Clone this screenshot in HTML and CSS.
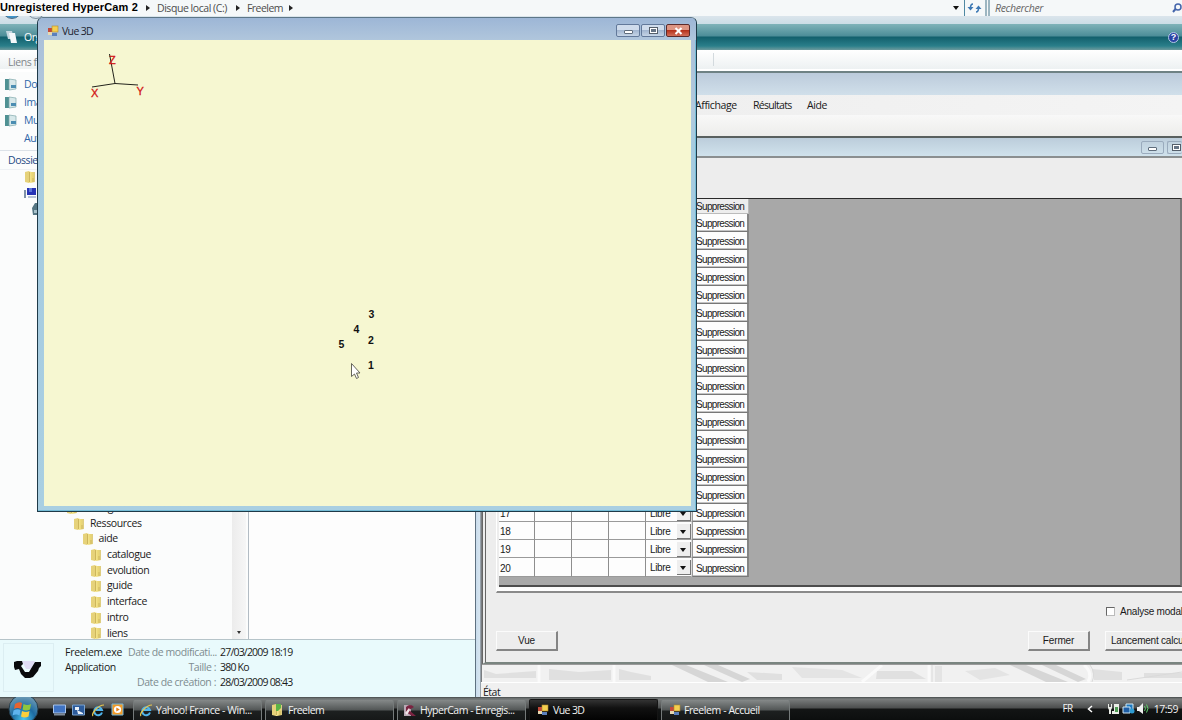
FILE: index.html
```
<!DOCTYPE html>
<html lang="fr">
<head>
  <meta charset="UTF-8">
  <title>Freelem</title>
  <link rel="stylesheet" href="styles.css">
</head>
<body>
  <svg width="0" height="0" class="defs">
    <defs>
      <linearGradient id="gold"><stop offset="0" stop-color="#f6e9a0"/><stop offset=".5" stop-color="#ecd873"/><stop offset="1" stop-color="#dccb82"/></linearGradient>
      <radialGradient id="orb" cx=".5" cy=".85" r=".8"><stop offset="0" stop-color="#49c5ee"/><stop offset=".5" stop-color="#1d6ba2"/><stop offset="1" stop-color="#6f9bb4"/></radialGradient>
      <symbol id="folder" viewBox="0 0 12 14"><path d="M1 2l4-1v12l-4-1z" fill="#e6d27a"/><path d="M5 1l2 1h4v10l-5 1H5z" fill="url(#gold)"/><path d="M5.500 2v10M9 8v4" stroke="#cdb65c" fill="none"/></symbol>
      <symbol id="form" viewBox="0 0 12 12"><rect x="1" y="3" width="4" height="4" fill="#c3493a"/><rect x="5" y="1" width="6" height="6" fill="#f4cf50" stroke="#b28b2c" stroke-width=".6"/><rect x="1" y="7" width="4" height="3" fill="#e8d9b0"/><rect x="5" y="8" width="5" height="3" fill="#5b80bd"/></symbol>
      <symbol id="ie" viewBox="0 0 14 14"><path d="M11 9.500A4 4 0 1 1 11 7H5" fill="none" stroke="#4fb3ea" stroke-width="2"/><path d="M2 13C0 11 7 2 13 2" fill="none" stroke="#e8c84f" stroke-width="1.200"/></symbol>
      <symbol id="doc" viewBox="0 0 12 13"><path d="M0 1h5v11H0z" fill="#4f9193"/><path d="M4 1l7 1v9l-7 1z" fill="#d7e8ea" stroke="#7fa7ab" stroke-width=".7"/><path d="M6 7h5v3H6z" fill="#4b8db2"/></symbol>
    </defs>
  </svg>

  <div class="desktop">
    <!-- explorateur -->
    <div class="explorer">
      <div class="address">
        <i class="sep"></i><span class="crumb c1">Disque local (C:)</span><i class="sep"></i><span class="crumb c2">Freelem</span><i class="sep"></i>
        <div class="addr-right">
          <i class="down"></i>
          <svg class="refresh" width="20" height="16" viewBox="0 0 20 16"><path d="M8 4Q5.500 4 5.500 8M11 12q2.500 0 2.500-4" fill="none" stroke="#3c78b4" stroke-width="1.600"/><path d="M2.500 7h6l-3 3.500zM10.500 9h6l-3-3.500z" fill="#3c78b4"/></svg>
          <span class="search">Rechercher</span>
          <svg class="loupe" width="12" height="16" viewBox="0 0 12 16"><circle cx="8" cy="7" r="3" fill="none" stroke="#4465ab" stroke-width="1.500"/><path d="M5.500 9L3 12" stroke="#4465ab" stroke-width="2"/></svg>
        </div>
      </div>
      <div class="glass">
        <svg width="60" height="8" viewBox="0 0 60 8"><circle cx="12" cy="-7" r="9.500" fill="#3f93c8" stroke="#4d6f88"/><circle cx="36" cy="-7" r="9.500" fill="#cfdbe4" stroke="#7b8d9b"/></svg>
      </div>
      <div class="teal">
        <svg width="14" height="15" viewBox="0 0 14 15"><path d="M1 1h6l2 8H3z" fill="#c4d6df"/><path d="M4 3h6l2 10H6z" fill="#f4f8fa"/></svg>
        <span>Org</span>
        <b class="help">?</b>
      </div>
      <div class="strip"><i></i></div>
      <div class="panes">
        <div class="nav">
          <div class="nav-links">
            <p class="nav-title">Liens f</p>
            <p class="nav-link"><svg width="12" height="13"><use href="#doc"/></svg>Do</p>
            <p class="nav-link"><svg width="12" height="13"><use href="#doc"/></svg>Ima</p>
            <p class="nav-link"><svg width="12" height="13"><use href="#doc"/></svg>Mu</p>
            <p class="nav-link more">Aut</p>
            <p class="nav-dossiers">Dossie</p>
            <div class="nav-tree">
              <svg class="n1" width="12" height="14"><use href="#folder"/></svg>
              <svg class="n1" width="14" height="12" viewBox="0 0 14 12"><path d="M3 1h9v7H3z" fill="#2633b5"/><path d="M5 1h3v4H5z" fill="#5b74d8"/><path d="M0 3h2v8H0z" fill="#7f92a8"/><path d="M4 9h8v2H4z" fill="#b8c4d6"/></svg>
              <svg class="n2" width="12" height="14" viewBox="0 0 12 14"><path d="M0 6l3-5h5v12H1z" fill="#557683"/><path d="M2 8h5v3H2z" fill="#a8c1ca"/></svg>
            </div>
          </div>
          <div class="tree" id="tree"></div>
          <div class="scroll"><i class="down small"></i></div>
        </div>
        <div class="files"></div>
      </div>
      <div class="details">
        <div class="thumb"><svg width="30" height="20" viewBox="0 0 30 20"><path d="M9 2h13l-4 8h-5z" fill="#e0dcf5"/><path d="M1 3l3-1h5l1 3-2 2 4 6h4l6-10h6v4l-2 2-1 3-5 6-3 1h-5l-4-4-2-5-4 1-1-3z" fill="#0a0a0c"/></svg></div>
        <div class="name"><p class="d-name">Freelem.exe</p><p class="d-app">Application</p></div>
        <div class="keys"><p class="k1">Date de modificati...</p><p class="k2">Taille :</p><p class="k3">Date de création :</p></div>
        <div class="vals"><p class="v1">27/03/2009 18:19</p><p class="v2">380 Ko</p><p class="v1">28/03/2009 08:43</p></div>
      </div>
    </div>

    <!-- fenêtre principale Freelem -->
    <div class="app">
      <div class="app-title"></div>
      <div class="menu"><span class="m1">Affichage</span><span class="m2">Résultats</span><span class="m3">Aide</span></div>
      <div class="tools"></div>
      <div class="child">
        <div class="child-title"><i class="cbtn"><s class="min"></s></i><i class="cbtn"><s class="max"></s></i></div>
        <div class="child-body">
          <div class="frame">
            <div class="grid">
              <div class="rows" id="rows"></div>
            </div>
          </div>
          <div class="check"><i></i><span>Analyse modal</span></div>
          <div class="buttons">
            <span class="btn vue">Vue</span>
            <span class="btn fermer">Fermer</span>
            <span class="btn calc">Lancement calcu</span>
          </div>
        </div>
      </div>
      <svg class="sketch" width="700" height="17" viewBox="0 0 700 17">
        <rect width="700" height="17" fill="#f1f1f1"/>
        <g fill="#e0e0e0"><path d="M2 5l12 4 40-3v7H2zM67 4l30 3 32-2v10H67zM137 4l12 3 20 4v4h-32zM265 7l35 2v6h-25zM395 6h35l14 8h-50zM610 4l30 3v8h-28zM662 8h38v5h-38z"/><path d="M310 2l50 3 20 8h-60zM453 1h7v16h-7zM483 6l30-3 15 7-30 5z" fill="#e4e4e4"/></g>
        <path d="M190 0h14l42 17h-20zM222 0h14l32 14-8 3zM528 0h16l42 17h-22zM560 0h14l30 14-8 3z" fill="#d6d6d6"/>
        <g fill="none" stroke="#fafafa" stroke-width="3"><path d="M57 0v17M132 0v17M380 17l20-17M447 0v17M602 0q9 8 4 17"/></g>
        <g fill="none" stroke="#dadada"><path d="M450 0v17M608 0q6 8 2 17M645 15l55-8"/></g>
      </svg>
      <div class="status">État</div>
    </div>

    <!-- fenêtre Vue 3D -->
    <div class="vue3d">
      <div class="v-title">
        <svg width="12" height="12"><use href="#form"/></svg>
        <span>Vue 3D</span>
        <i class="wbtn"><s class="min"></s></i><i class="wbtn"><s class="max"></s></i>
        <i class="wbtn close"><svg width="9" height="8" viewBox="0 0 9 8"><path d="M1.500 1l6 6M7.500 1l-6 6" stroke="#fff" stroke-width="2"/></svg></i>
      </div>
      <svg class="view" width="647" height="466" viewBox="44 40 647 466">
        <path d="M109.500 54l5.500 29.500L92 87M115 83.500l23 1.500" fill="none" stroke="#23231c"/>
        <g class="axis"><text x="91" y="97">X</text><text x="136.500" y="94.500">Y</text><text x="109" y="63.500">Z</text></g>
        <g class="nodes"><text x="368.500" y="318">3</text><text x="353.500" y="332.500">4</text><text x="338.500" y="348">5</text><text x="368" y="344">2</text><text x="368" y="369">1</text></g>
        <path d="M351.500 363.500v13l3-2.500 2 4.500 2-1-2-4.500h3.500z" fill="#fff" stroke="#55554c" stroke-width=".9"/>
      </svg>
    </div>

    <b class="watermark">Unregistered HyperCam 2</b>
  </div>

  <div class="taskbar">
    <svg class="start" width="34" height="23" viewBox="0 0 34 23"><circle cx="16.500" cy="12" r="14.500" fill="url(#orb)" stroke="#253d4c"/><path d="M8 7q4-3 7-1l-1 6q-4-2-7 0z" fill="#e8642f"/><path d="M16.500 7q4 2 7.500 0l-1 5.500q-4 2-7.500 0z" fill="#8fc63e"/><path d="M6.500 13.500q4-2 7-.5l-1 5.500q-3-2-7 0z" fill="#5fb4ee"/><path d="M15 14q4 2 7.500 0l-1 5.500q-4 2-7.500 0z" fill="#fbcf3c"/></svg>
    <div class="quick">
      <svg width="13" height="12" viewBox="0 0 13 12"><path d="M.5 1h12v8H.5z" fill="#3f73c3" stroke="#a8c4ea"/><path d="M1 10.500h11" stroke="#7f8b98" stroke-width="2"/></svg>
      <svg width="13" height="12" viewBox="0 0 13 12"><path d="M.5 1h12v10H.5z" fill="#2c5b9b" stroke="#7ba4cf"/><path d="M3 3h4v3H3zM5 6l6 3v1H6z" fill="#e8f0f8"/></svg>
      <svg width="14" height="14"><use href="#ie"/></svg>
      <svg width="13" height="13" viewBox="0 0 13 13"><path d="M1 1h11v11H1z" fill="#f29a26" stroke="#73b7dd"/><circle cx="6.500" cy="6.500" r="3.600" fill="#fff"/><path d="M5.300 4.500l3.500 2-3.500 2z" fill="#e77c12"/></svg>
    </div>
    <div class="tasks">
      <div class="task"><svg width="14" height="14"><use href="#ie"/></svg><span class="t1">Yahoo! France - Win...</span></div>
      <div class="task"><svg width="12" height="14" viewBox="0 0 12 14"><use href="#folder" width="12" height="14"/><path d="M5 1h5v4L7 8H5z" fill="#5cb446"/></svg><span class="t2">Freelem</span></div>
      <div class="task"><svg width="14" height="13" viewBox="0 0 14 13"><path d="M1 1h7v11H1z" fill="#b9a9b5"/><path d="M3 3q4-4 8 0L6 6l7 6H9L3 8z" fill="#7a2340"/><path d="M2 9l4-5 1 2-3 5z" fill="#f0e3e8"/></svg><span class="t3">HyperCam - Enregis...</span></div>
      <div class="task on"><svg width="12" height="12"><use href="#form"/></svg><span class="t4">Vue 3D</span></div>
      <div class="task"><svg width="12" height="12"><use href="#form"/></svg><span class="t5">Freelem - Accueil</span></div>
    </div>
    <div class="tray">
      <span class="lang">FR</span>
      <svg class="chev" width="6" height="8" viewBox="0 0 6 8"><path d="M5 1L1.500 4 5 7" fill="none" stroke="#fff" stroke-width="1.500"/></svg>
      <svg width="42" height="13" viewBox="0 0 42 13"><path d="M0 2h1v3h2V2h1v4L3 8v4H1V8L0 6zM6 2h5v10H4V9h2z" fill="#e9ece6"/><path d="M7 5h3v5H7z" fill="#4e9c54"/><path d="M18 2h7v6h-7z" fill="#1e78be" stroke="#d0e8f5"/><path d="M15 5h7v6h-7z" fill="#1f5ea5" stroke="#d0e8f5"/><circle cx="24" cy="9" r="2.500" fill="#2f9bd1"/><path d="M29 5h2l4-4v11l-4-3h-2z" fill="#f0f0f0"/><path d="M36.500 4q2 2.500 0 5M38.500 2.500q3 4 0 8" fill="none" stroke="#5fd06b"/></svg>
      <span class="clock">17:59</span>
    </div>
  </div>

  <script>
    // lignes de la grille
    var rows = '<i class="th"></i><i class="th"></i><i class="th"></i><i class="th"></i><i class="th"></i><i class="th">Suppression</i>';
    for (var i = 1; i <= 20; i++) {
      rows += '<i>' + i + '</i><i></i><i></i><i></i><i class="libre">Libre<u></u></i><i class="sup">Suppression</i>';
    }
    document.getElementById('rows').innerHTML = rows;

    // arborescence des dossiers : nom, niveau
    var tree = [['Debug', 0], ['Ressources', 1], ['aide', 2], ['catalogue', 3], ['evolution', 3], ['guide', 3], ['interface', 3], ['intro', 3], ['liens', 3]];
    var html = '';
    for (var j = 0; j < tree.length; j++) {
      html += '<p class="lv' + tree[j][1] + '"><svg width="12" height="14"><use href="#folder"/></svg>' + tree[j][0] + '</p>';
    }
    document.getElementById('tree').innerHTML = html;
  </script>
</body>
</html>
```
FILE: styles.css
```
*{margin:0;padding:0;box-sizing:border-box;}
body{width:1182px;height:720px;overflow:hidden;font:11px/16px "Open Sans","Noto Sans",sans-serif;color:#1a1a1a;display:flex;flex-direction:column;}
i,s,u{font-style:normal;text-decoration:none;}
svg{display:block;flex:none;}
span,p,b{white-space:nowrap;}
.defs{position:absolute;}

.desktop{position:relative;height:697px;overflow:hidden;}
.watermark{position:absolute;left:0;top:0;width:140px;height:13px;background:#fafbfc;color:#000;font:bold 11px/14px "Liberation Sans",Arial,sans-serif;letter-spacing:.12px;}

/* explorateur */
.explorer{height:697px;display:flex;flex-direction:column;background:#fbfcfc;}
.address{height:16px;background:#f5f8f9;display:flex;align-items:center;padding-left:146px;color:#4c4c4c;}
.sep{width:0;height:0;border:3px solid transparent;border-left:4px solid #222;border-right:0;}
.crumb{font-size:10.5px;padding-left:7px;}
.c1{width:86px;letter-spacing:-.45px;}
.c2{width:49px;letter-spacing:-.55px;}
.addr-right{margin-left:auto;display:flex;align-items:center;}
.down{width:0;height:0;border:3px solid transparent;border-top:4px solid #111;border-bottom:0;}
.refresh{margin-left:5px;border-left:1px solid #4f88a2;width:21px;}
.search{width:185px;border-left:5px double #9db6c1;padding-left:5px;font-size:10.5px;font-style:italic;letter-spacing:-.35px;color:#666;}
.glass{height:8px;background:linear-gradient(#dbe5ec,#cbdde6);}
.teal{height:26px;background:linear-gradient(#7fb3b9,#4c8d98 12px,#125f6c 13px,#2a7f8a 22px,#6d9a9d);display:flex;align-items:center;padding-left:5px;color:#fff;}
.teal span{margin-left:5px;font-size:10.5px;letter-spacing:-.5px;}
.help{margin-left:auto;margin-right:3px;width:11px;height:11px;border-radius:50%;background:#2a43a4;border:1px solid #b4c8e6;color:#fff;font:bold 9px/9px "Liberation Sans",sans-serif;text-align:center;}
.strip{height:22px;background:linear-gradient(#fff,#edf1f2);border-bottom:3px solid #fff;padding:3px 0 0 713px;}
.strip i{display:block;height:13px;border-left:1px solid #d3dade;}
.panes{height:567px;display:flex;}
.nav{width:249px;display:flex;border-right:1px solid #b3bcc4;}
.nav-links{width:66px;height:438px;color:#2f66a8;margin-top:-19px;font-size:10.5px;letter-spacing:-.45px;}
.nav-title{color:#81868b;padding-left:8px;height:21px;margin-top:1px;}
.nav-link{display:flex;align-items:center;gap:7px;height:18px;padding-left:5px;}
.nav-link.more{padding-left:24px;}
.nav-dossiers{border-top:1px solid #dce2e8;border-bottom:1px solid #eef1f4;height:20px;line-height:18px;margin-top:3px;padding-left:8px;color:#274a85;}
.nav-tree svg{margin:3px 0 0 24px;}
.nav-tree svg:first-child{margin-top:0;}
.nav-tree svg.n2{margin-left:32px;}
.tree{width:166px;margin-top:428px;font-size:10.5px;letter-spacing:-.38px;overflow:hidden;}
.tree p{height:15.7px;line-height:15.7px;display:flex;align-items:center;gap:5px;}
.lv0{padding-left:0;}
.lv1{padding-left:7px;}
.lv2{padding-left:15.5px;}
.lv3{padding-left:24px;}
.scroll{width:14px;background:linear-gradient(90deg,#ececec,#f6f6f6);display:flex;align-items:flex-end;justify-content:center;padding-bottom:5px;}
.small{border-width:3px 2.5px 0;border-top-color:#333;}
.files{flex:1;background:#fdfdfd;}
.details{height:58px;border-top:1px solid #b6c4c9;background:#e9fafc;display:flex;line-height:15px;padding-top:5px;font-size:10.5px;}
.thumb{width:51px;height:49px;margin:-2px 0 0 3px;border:1px solid #dceef2;padding:15px 0 0 9px;}
.name{width:64px;padding-left:11px;}
.keys{width:88px;margin-left:10px;text-align:right;color:#7e8c90;margin-right:4px;}
.d-name{letter-spacing:-.25px;}
.d-app{letter-spacing:-.35px;}
.k1,.k2,.k3{letter-spacing:-.42px;}
.v1{letter-spacing:-.8px;}
.v2{letter-spacing:-.8px;}

/* fenetre principale */
.app{position:absolute;left:475px;top:71px;width:707px;height:626px;padding-left:7px;background:linear-gradient(90deg,#5f7180 1px,#c9dcec 1px,#d7e5f0 5px,#596067 6px,#9a9a9a 7px);border-top:2px solid #6f8284;display:flex;flex-direction:column;}
.app-title{height:22px;flex:none;margin-left:-6px;background:linear-gradient(#bccbdb,#d0dfea);}
.menu{height:20px;flex:none;background:linear-gradient(90deg,#ededed,#f4f4f4);display:flex;align-items:center;padding-left:213px;font-size:10.5px;}
.m1{width:58px;letter-spacing:-.38px;}
.m2{width:54px;letter-spacing:-.7px;}
.m3{letter-spacing:-.4px;}
.tools{height:21px;flex:none;background:linear-gradient(#f8f8f8,#ededeb);}
.child{height:528px;background:#ededed;border-top:2px solid #59605f;border-left:4px double #666;border-bottom:2px solid #7a8580;overflow:hidden;flex:none;}
.child-title{height:20px;background:linear-gradient(#bccddb,#d0e2ec);border-bottom:2px solid #8b8f90;display:flex;justify-content:flex-end;padding-top:3px;gap:3px;}
.cbtn{width:23px;height:13px;border:1px solid #9aabbd;border-radius:2px;display:flex;align-items:center;justify-content:center;}
.cbtn:last-child{width:15px;border-right:0;padding-left:2px;}
.min{width:9px;height:4px;border:1px solid #5f6d7c;background:#fff;border-radius:1px;margin-top:3px;}
.max{width:9px;height:7px;flex:none;border:1px solid #555f6b;background:#f5f5f5;box-shadow:inset 0 0 0 1px #fff,inset 0 0 0 4px #667485;}
.child-body{display:flex;flex-direction:column;}
.frame{margin:40px 0 0 10px;height:395px;border-bottom:2px solid #8a8a8a;border-left:1px solid #fff;padding-left:2px;background:linear-gradient(#ededed 388px,#fafafa 389px,#fff);}
.grid{height:389px;background:#a8a8a8;border-top:1px solid #2a2a2a;border-bottom:2px solid #4c4c4c;border-right:2px solid #777;}
.rows{display:grid;grid-template-columns:36px 37px 37px 37px 46px 57px;width:250px;grid-template-rows:14.5px;grid-auto-rows:18.16px;font:10px "Liberation Sans",Arial,sans-serif;letter-spacing:-.65px;}
.rows i{background:#fdfdfd;border-right:1px solid #8e8e8e;border-bottom:1px solid #9a9a9a;padding:2px 0 0 1px;display:flex;align-items:center;letter-spacing:-.2px;}
.rows .th{background:#ededed;border-color:#bbb;padding-left:4px;letter-spacing:-.67px;}
.rows .libre{padding:1px 0 0 4px;border-right-color:#ddd;letter-spacing:-.35px;justify-content:space-between;}
.rows .sup{padding-left:3px;border-right:2px solid #858585;border-bottom:1px solid #777;border-left:1px solid #999;box-shadow:inset 0 -1px #c4c4c4;letter-spacing:-.67px;}
.rows u{width:14px;height:15px;background:#eee;border-right:1px solid #777;border-bottom:1px solid #777;padding:6px 0 0 3px;}
.rows u:before{content:"";display:block;width:0;border:3.5px solid transparent;border-top:4px solid #111;border-bottom:0;}
.check{height:16px;margin-top:10px;padding-left:620px;display:flex;align-items:center;gap:5px;font:10px "Liberation Sans",Arial,sans-serif;letter-spacing:-.22px;}
.check i{width:9px;height:9px;background:#fff;border:1px solid #bbb;border-top-color:#666;border-left-color:#666;flex:none;}
.buttons{margin-top:12px;display:flex;padding-left:10px;font:10px "Liberation Sans",Arial,sans-serif;}
.btn{width:62px;height:20px;line-height:18px;flex:none;text-align:center;letter-spacing:-.1px;border:1px solid #fbfbfb;border-right:2px solid #858585;border-bottom:2px solid #858585;}
.fermer{margin-left:470px;}
.calc{margin-left:15px;width:77px;text-align:left;padding-left:5px;letter-spacing:-.22px;border-right:0;}
.sketch{margin-top:1px;}
.status{height:15px;flex:none;margin-left:-1px;background:#f0f0f0;font-size:10.5px;line-height:14px;padding:2px 0 0 2px;letter-spacing:-.5px;border-top:1px solid #fff;}

/* vue 3D */
.vue3d{position:absolute;left:37px;top:17px;width:660px;height:495px;border:1px solid #1f3a48;border-top-color:#5d7788;border-radius:6px 6px 0 0;background:linear-gradient(#a8bed8,#b2c9dd 90px,#a6cbe0 130px,#a9cfe2);padding:0 5px 5px 6px;box-shadow:inset -1px -1px #74bcd6;}
.v-title{height:22px;margin:0 -5px 0 -6px;padding:4px 6px 0 9px;display:flex;align-items:center;background:linear-gradient(#9db6d6,#b0c6dc);border-radius:5px 5px 0 0;}
.v-title svg{margin-top:-1px;}
.v-title span{margin:-1px auto 0 3px;font-size:10.5px;letter-spacing:-.65px;color:#1d2430;}
.wbtn{width:24px;height:13px;margin-left:1px;margin-top:-1px;border:1px solid #62799a;border-radius:2px;background:linear-gradient(#cfdcec 50%,#a3b7d1 50%,#c5d5e6);display:flex;align-items:center;justify-content:center;}
.close{background:linear-gradient(#dd9583 50%,#b6331c 50%,#d3705a);border-color:#5c2b2b;}
.close svg{margin:0;}
.view{background:#f6f7d1;}
.axis{font:11px "Liberation Sans",sans-serif;fill:#d21414;stroke:#d21414;stroke-width:.3;}
.nodes{font:bold 10.5px "Liberation Sans",sans-serif;fill:#111;}

/* barre des taches */
.taskbar{height:23px;background:linear-gradient(#454a4a,#7a7d7d 2px,#4b4d4d 11px,#131515 12px,#0c0e0e);display:flex;color:#f2f2f2;font-size:10.5px;}
.start{margin-left:7px;}
.quick{display:flex;align-items:center;gap:6px;padding:2px 0 0 12px;width:92px;}
.tasks{display:flex;gap:3px;padding-top:2px;}
.task{width:129px;height:21px;border:1px solid #757a7a;border-bottom:0;border-radius:2px 2px 0 0;background:linear-gradient(#858989,#525656 10px,#1d2020 11px,#161818);display:flex;align-items:center;gap:3px;padding-left:5px;}
.task span{line-height:18px;margin-top:-1px;}
.task.on{background:linear-gradient(#333,#111 8px,#030303);border-color:#151515;}
.task.on,.task:last-child{padding-left:7px;}
.t1{letter-spacing:-.42px;}
.t3{letter-spacing:-.48px;}
.t2{letter-spacing:-.5px;padding-left:2px;}
.t4{letter-spacing:-.6px;padding-left:1px;}
.t5{letter-spacing:-.42px;}
.tray{margin-left:auto;display:flex;align-items:center;padding-right:4px;}
.lang{letter-spacing:-.5px;font-size:10px;margin-top:-2px;}
.chev{margin:1px 15px 0 14px;}
.clock{margin-left:4px;letter-spacing:-.5px;}
```
